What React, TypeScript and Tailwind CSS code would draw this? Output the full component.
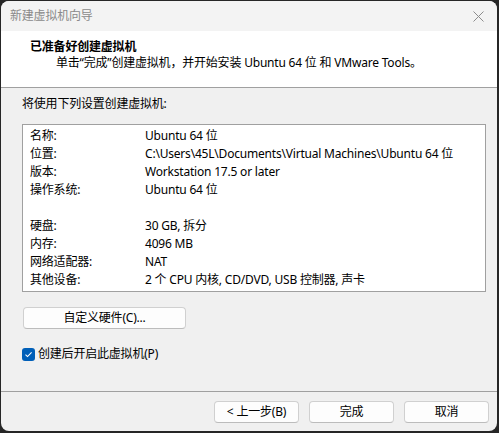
import React from 'react';

const rows: [string, string][] = [
  ['名称:', 'Ubuntu 64 位'],
  ['位置:', 'C:\\Users\\45L\\Documents\\Virtual Machines\\Ubuntu 64 位'],
  ['版本:', 'Workstation 17.5 or later'],
  ['操作系统:', 'Ubuntu 64 位'],
  ['', ''],
  ['硬盘:', '30 GB, 拆分'],
  ['内存:', '4096 MB'],
  ['网络适配器:', 'NAT'],
  ['其他设备:', '2 个 CPU 内核, CD/DVD, USB 控制器, 声卡'],
];

function Btn({ children, className = '' }: { children: React.ReactNode; className?: string }) {
  return (
    <button className={`h-[22px] rounded-[4px] border border-[#d0d0d0] border-b-[#bcbcbc] bg-[#fdfdfd] text-[12px] leading-[16px] text-black ${className}`}>
      {children}
    </button>
  );
}

export default function App() {
  return (
    <div
      className="w-[499px] h-[433px] bg-[#262626] pt-px pl-px pr-[2px] pb-[2px] tracking-[-0.2px]"
      style={{ fontFamily: '"Noto Sans", "Noto Sans CJK SC", sans-serif' }}
    >
      <div className="flex h-full flex-col overflow-hidden rounded-[8px] bg-[#f0f0f0]">
        {/* title bar */}
        <div className="flex h-[30px] shrink-0 items-center justify-between bg-[#f3f3f3] pl-[9px] pr-[12px]">
          <span className="text-[12px] leading-[16px] text-[#8a8a8a]">新建虚拟机向导</span>
          <svg width="11" height="11" viewBox="0 0 11 11" className="mr-[1px]">
            <path d="M0.5 0.5 L10.5 10.5 M10.5 0.5 L0.5 10.5" stroke="#8c8c8c" strokeWidth="1" fill="none" />
          </svg>
        </div>

        {/* header */}
        <div className="h-[57px] shrink-0 border-b border-[#a0a0a0] bg-white pt-[8px]">
          <div className="pl-[29px] text-[12px] font-bold leading-[16px] text-black">已准备好创建虚拟机</div>
          <div className="pl-[55px] text-[12px] leading-[16px] text-black">
            单击“完成”创建虚拟机，并开始安装 Ubuntu 64 位 和 VMware Tools。
          </div>
        </div>

        {/* body */}
        <div className="flex flex-1 flex-col px-[21px] pt-[8px]">
          <div className="text-[12px] leading-[16px] text-black">将使用下列设置创建虚拟机:</div>

          <div className="mt-[12px] h-[168px] w-[464px] border border-[#a0a0a0] bg-white pl-[7px] pt-[2px]">
            {rows.map(([k, v], i) => (
              <div key={i} className="flex h-[18px] items-center text-[12px] text-black">
                <span className="w-[115px] shrink-0">{k}</span>
                <span className="whitespace-nowrap">{v}</span>
              </div>
            ))}
          </div>

          <Btn className="ml-px mt-[15px] w-[163px]">自定义硬件(C)...</Btn>

          <label className="mt-[17px] flex items-center gap-[3px] text-[12px] leading-[16px] text-black">
            <span className="flex h-[13px] w-[13px] items-center justify-center rounded-[3px] bg-[#005fb8]">
              <svg width="9" height="9" viewBox="0 0 9 9">
                <path d="M1.5 4.7 L3.5 6.6 L7.6 2.4" stroke="white" strokeWidth="1.1" fill="none" />
              </svg>
            </span>
            创建后开启此虚拟机(P)
          </label>
        </div>

        {/* footer */}
        <div className="h-[40px] shrink-0 border-t border-[#a0a0a0] pt-[9px]">
          <div className="flex justify-end gap-[10px] pr-[8px]">
            <Btn className="w-[85px]">&lt; 上一步(B)</Btn>
            <Btn className="w-[85px]">完成</Btn>
            <Btn className="w-[85px]">取消</Btn>
          </div>
        </div>
      </div>
    </div>
  );
}
